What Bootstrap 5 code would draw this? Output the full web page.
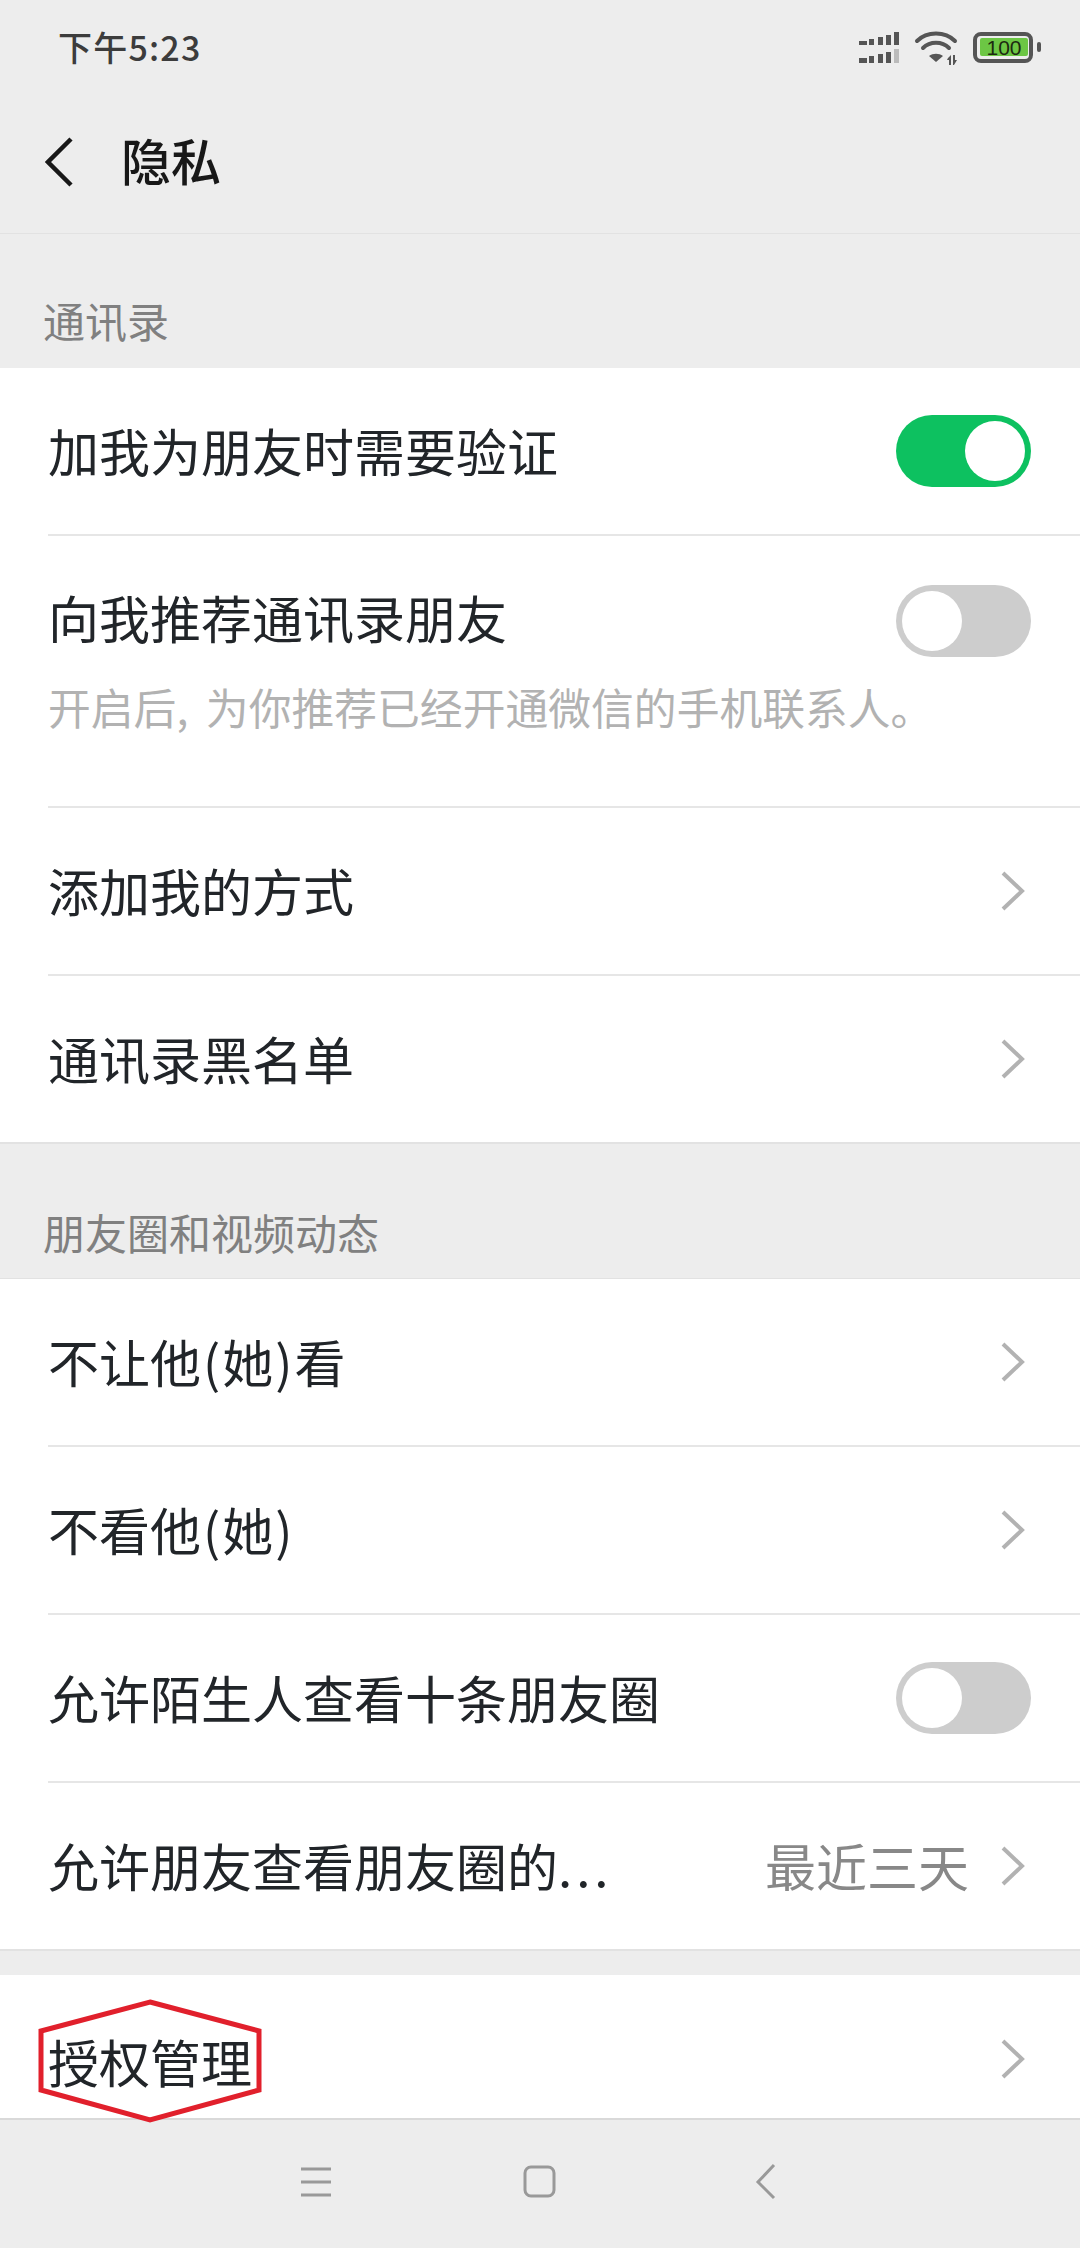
<!DOCTYPE html>
<html lang="zh-CN">
<head>
  <meta charset="UTF-8">
  <meta name="viewport" content="width=device-width, initial-scale=1">
  <title>隐私</title>
  <link href="https://cdn.jsdelivr.net/npm/bootstrap@5.3.0/dist/css/bootstrap.min.css" rel="stylesheet">
  <style>
    html, body { height: 2248px; overflow: hidden; }
    body { background-color: #ededed; font-family: "Noto Sans CJK SC", "Liberation Sans", sans-serif; color: #181818; }
    .status-bar { height: 96px; padding: 0 35px 0 58px; }
    .status-time { font-size: 34px; font-weight: 500; color: #3c3c3c; letter-spacing: 1.2px; line-height: 1; margin-top: -2px; }
    .title-bar { height: 138px; padding-left: 45px; padding-bottom: 6px; border-bottom: 1px solid #e2e2e2; }
    .title-text { font-size: 50px; font-weight: 500; margin-left: 46px; line-height: 1; margin-top: -5px; }
    .section-title { font-size: 42px; color: #808080; padding-left: 43px; line-height: 1; }
    .title-one { height: 134px; padding-top: 65px; }
    .title-two { height: 135px; padding-top: 67px; border-bottom: 1px solid #e2e2e2; }
    .set-list { border-radius: 0; background-color: #fff; border-bottom: 2px solid #e2e2e2; }
    .set-item { height: 168px; padding: 0 0 0 48px; border: 0; background-color: #fff; }
    .set-item:last-child { height: 166px; }
    .set-inner { height: 100%; padding-right: 49px; border-bottom: 2px solid #e6e6e6; }
    .set-item:last-child .set-inner { border-bottom: 0; }
    .set-tall { height: 272px; }
    .set-tall .set-inner { align-items: flex-start !important; padding-top: 51px; }
    .set-tall .set-toggle { margin-top: -2px; }
    .set-tall-text { flex: 1; min-width: 0; }
    .set-item.auth-row { height: 143px; }
    .auth-row .set-inner { height: 168px; }
    .auth-row .set-label { margin-bottom: -5px; }
    .set-label { font-size: 51px; line-height: 1.2; white-space: nowrap; margin-bottom: 1px; }
    .set-dots { letter-spacing: 4px; }
    .set-paren { margin: 0 2px; }
    .set-sub { font-size: 42.8px; line-height: 1; color: #b2b2b2; margin-top: 37px; white-space: nowrap; word-spacing: 8px; }
    .set-value { font-size: 51px; line-height: 1; color: #888; margin-right: 32px; margin-bottom: 1px; }
    .set-arrow { width: 24px; height: 40px; margin-right: 6px; flex-shrink: 0; }
    .set-toggle { width: 135px; height: 72px; border-radius: 36px; background-color: #cdcdcd; padding: 6px; flex-shrink: 0; }
    .set-toggle::after { content: ""; display: block; width: 60px; height: 60px; border-radius: 50%; background-color: #fff; }
    .toggle-on { background-color: #0dc160; justify-content: flex-end; }
    .gap-band { height: 24px; }
    .red-mark { position: absolute; left: 38px; top: 24px; width: 224px; height: 124px; }
    .soft-bar { height: 130px; border-top: 2px solid #d9d9d9; padding-bottom: 4px; }
    .soft-btn { width: 40px; height: 40px; margin: 0 92px; }
    .batt-num { font: 400 21px "Liberation Sans", sans-serif; fill: #1c2a10; }
  </style>
</head>
<body>
  <div class="status-bar d-flex align-items-center justify-content-between">
    <span class="status-time">下午5:23</span>
    <svg width="190" height="40" viewBox="855 28 190 40" aria-hidden="true">
      <g fill="#555">
        <path d="M859 41h8v4h-8zM869 39h5v6h-5zM878 37h5v8h-5zM886 35h5v10h-5zM894 32h5v13h-5z"/>
        <path d="M859 58h8v5h-8zM869 56h5v7h-5zM878 54h5v9h-5zM886 52h5v11h-5z"/>
      </g>
      <path fill="#bbb" d="M894 49h5v14h-5z"/>
      <g fill="none" stroke="#555" stroke-width="4" stroke-linecap="round">
        <path d="M917 41C927 31 945 31 955 41"/>
        <path d="M923 48C930 41 942 41 949 48"/>
      </g>
      <path fill="#555" d="M929 56C933 53 939 53 943 56L936 62Z"/>
      <path fill="#555" d="M948 58l3-3v10h-2v-5h-2zM953 55h2v5h2l-3 5h-1z"/>
      <rect x="975" y="34" width="56" height="27" rx="6" fill="none" stroke="#555" stroke-width="4"/>
      <rect x="980" y="38" width="48" height="18" rx="2" fill="#6cc644"/>
      <text class="batt-num" x="1004" y="55" text-anchor="middle">100</text>
      <rect x="1037" y="42" width="4" height="10" rx="2" fill="#555"/>
    </svg>
  </div>

  <div class="title-bar d-flex align-items-center">
    <svg width="30" height="50" viewBox="0 0 30 50" aria-hidden="true">
      <path d="M26 2L3 25L26 48" fill="none" stroke="#181818" stroke-width="4.5"/>
    </svg>
    <span class="title-text">隐私</span>
  </div>

  <div class="section-title title-one">通讯录</div>
  <div class="list-group list-group-flush set-list">
    <div class="list-group-item set-item">
      <div class="set-inner d-flex align-items-center justify-content-between">
        <span class="set-label">加我为朋友时需要验证</span>
        <div class="set-toggle toggle-on d-flex"></div>
      </div>
    </div>
    <div class="list-group-item set-item set-tall">
      <div class="set-inner d-flex align-items-center justify-content-between">
        <div class="set-tall-text">
          <div class="set-label">向我推荐通讯录朋友</div>
          <div class="set-sub">开启后, 为你推荐已经开通微信的手机联系人。</div>
        </div>
        <div class="set-toggle d-flex"></div>
      </div>
    </div>
    <div class="list-group-item set-item">
      <div class="set-inner d-flex align-items-center justify-content-between">
        <span class="set-label">添加我的方式</span>
        <svg class="set-arrow" viewBox="0 0 24 40" aria-hidden="true"><path d="M2 2L21 20L2 38" fill="none" stroke="#b2b2b2" stroke-width="4"/></svg>
      </div>
    </div>
    <div class="list-group-item set-item">
      <div class="set-inner d-flex align-items-center justify-content-between">
        <span class="set-label">通讯录黑名单</span>
        <svg class="set-arrow" viewBox="0 0 24 40" aria-hidden="true"><path d="M2 2L21 20L2 38" fill="none" stroke="#b2b2b2" stroke-width="4"/></svg>
      </div>
    </div>
  </div>

  <div class="section-title title-two">朋友圈和视频动态</div>
  <div class="list-group list-group-flush set-list">
    <div class="list-group-item set-item">
      <div class="set-inner d-flex align-items-center justify-content-between">
        <span class="set-label">不让他<span class="set-paren">(</span>她<span class="set-paren">)</span>看</span>
        <svg class="set-arrow" viewBox="0 0 24 40" aria-hidden="true"><path d="M2 2L21 20L2 38" fill="none" stroke="#b2b2b2" stroke-width="4"/></svg>
      </div>
    </div>
    <div class="list-group-item set-item">
      <div class="set-inner d-flex align-items-center justify-content-between">
        <span class="set-label">不看他<span class="set-paren">(</span>她<span class="set-paren">)</span></span>
        <svg class="set-arrow" viewBox="0 0 24 40" aria-hidden="true"><path d="M2 2L21 20L2 38" fill="none" stroke="#b2b2b2" stroke-width="4"/></svg>
      </div>
    </div>
    <div class="list-group-item set-item">
      <div class="set-inner d-flex align-items-center justify-content-between">
        <span class="set-label">允许陌生人查看十条朋友圈</span>
        <div class="set-toggle d-flex"></div>
      </div>
    </div>
    <div class="list-group-item set-item">
      <div class="set-inner d-flex align-items-center justify-content-between">
        <span class="set-label">允许朋友查看朋友圈的<span class="set-dots">...</span></span>
        <div class="d-flex align-items-center">
          <span class="set-value">最近三天</span>
          <svg class="set-arrow" viewBox="0 0 24 40" aria-hidden="true"><path d="M2 2L21 20L2 38" fill="none" stroke="#b2b2b2" stroke-width="4"/></svg>
        </div>
      </div>
    </div>
  </div>

  <div class="gap-band"></div>
  <div class="list-group list-group-flush set-list border-0 overflow-visible">
    <div class="list-group-item set-item auth-row position-relative">
      <div class="set-inner d-flex align-items-center justify-content-between">
        <span class="set-label">授权管理</span>
        <svg class="set-arrow" viewBox="0 0 24 40" aria-hidden="true"><path d="M2 2L21 20L2 38" fill="none" stroke="#b2b2b2" stroke-width="4"/></svg>
      </div>
      <svg class="red-mark" viewBox="0 0 224 124" aria-hidden="true"><path d="M112 3L221 32V91L112 121L3 91V32Z" fill="none" stroke="#e1202c" stroke-width="5"/></svg>
    </div>
  </div>

  <div class="soft-bar d-flex align-items-center justify-content-center">
    <svg class="soft-btn" viewBox="0 0 40 40" aria-hidden="true"><path d="M5 7h30M5 20h30M5 33h30" fill="none" stroke="#999" stroke-width="3"/></svg>
    <svg class="soft-btn" viewBox="0 0 40 40" aria-hidden="true"><rect x="5" y="5" width="29" height="29" rx="6" fill="none" stroke="#999" stroke-width="3"/></svg>
    <svg class="soft-btn" viewBox="0 0 40 40" aria-hidden="true"><path d="M30 3L14 20L30 36" fill="none" stroke="#999" stroke-width="3"/></svg>
  </div>
  <script src="https://cdn.jsdelivr.net/npm/bootstrap@5.3.0/dist/js/bootstrap.bundle.min.js"></script>
</body>
</html>
